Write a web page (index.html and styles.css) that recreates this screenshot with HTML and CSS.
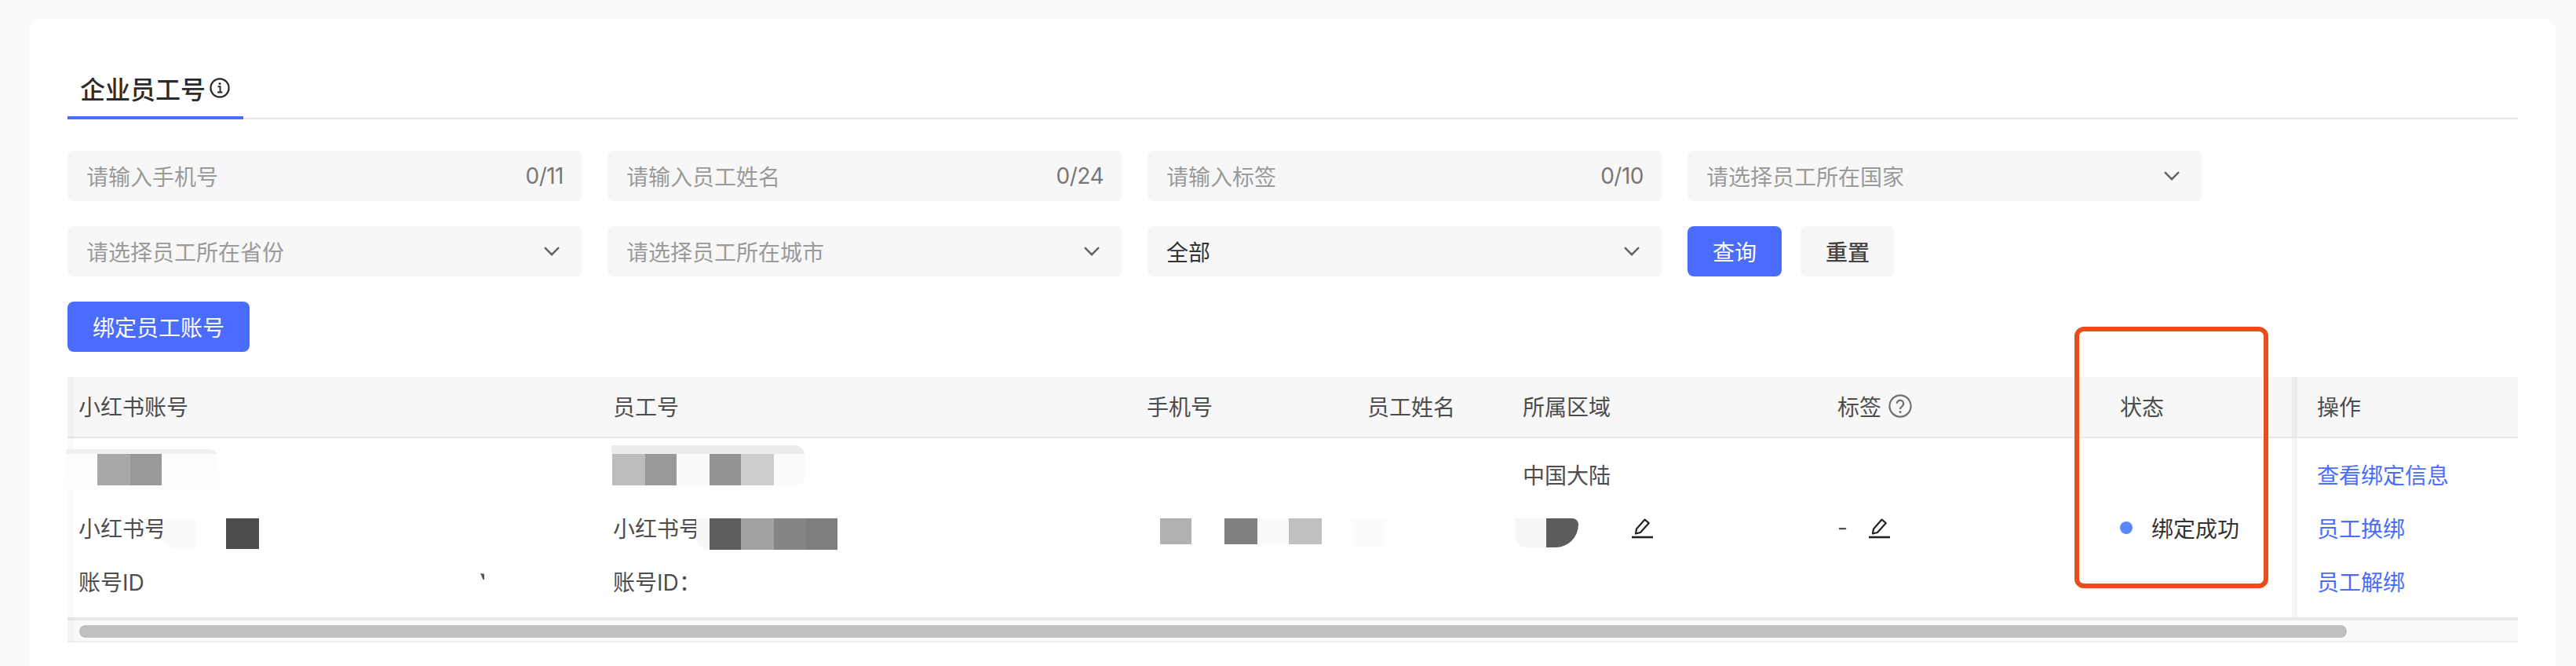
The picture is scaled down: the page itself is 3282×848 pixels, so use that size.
FILE: index.html
```html
<!DOCTYPE html>
<html lang="zh-CN">
<head>
<meta charset="utf-8">
<title>企业员工号</title>
<link rel="stylesheet" href="styles.css">
</head>
<body>
<main class="card">
  <nav class="tabs">
    <div class="tab">
      <span>企业员工号</span>
      <svg class="info-icon" viewBox="0 0 26 26" fill="none" stroke="#2b2b2b"><circle cx="13" cy="13" r="11.6" stroke-width="2.2"/><path d="M10.5 11.3h3v7M10 18.6h6.4" stroke-width="2"/><circle cx="13" cy="7.6" r="1.5" fill="#2b2b2b" stroke="none"/></svg>
    </div>
  </nav>

  <section class="filters">
    <div class="field"><span class="placeholder">请输入手机号</span><span class="count">0/11</span></div>
    <div class="field"><span class="placeholder">请输入员工姓名</span><span class="count">0/24</span></div>
    <div class="field"><span class="placeholder">请输入标签</span><span class="count">0/10</span></div>
    <div class="field"><span class="placeholder">请选择员工所在国家</span><svg class="chevron" viewBox="0 0 20 12" fill="none" stroke="#666" stroke-width="2.6"><path d="M1 1.2l9 9 9-9"/></svg></div>
    <div class="field"><span class="placeholder">请选择员工所在省份</span><svg class="chevron" viewBox="0 0 20 12" fill="none" stroke="#666" stroke-width="2.6"><path d="M1 1.2l9 9 9-9"/></svg></div>
    <div class="field"><span class="placeholder">请选择员工所在城市</span><svg class="chevron" viewBox="0 0 20 12" fill="none" stroke="#666" stroke-width="2.6"><path d="M1 1.2l9 9 9-9"/></svg></div>
    <div class="field"><span class="value">全部</span><svg class="chevron" viewBox="0 0 20 12" fill="none" stroke="#666" stroke-width="2.6"><path d="M1 1.2l9 9 9-9"/></svg></div>
    <div class="actions">
      <button class="btn btn-primary">查询</button>
      <button class="btn btn-plain">重置</button>
    </div>
  </section>

  <button class="btn btn-primary btn-bind">绑定员工账号</button>

  <section class="table">
    <div class="row head">
      <div class="cell">小红书账号</div>
      <div class="cell">员工号</div>
      <div class="cell">手机号</div>
      <div class="cell">员工姓名</div>
      <div class="cell">所属区域</div>
      <div class="cell cell-tag">标签
        <svg class="help-icon" viewBox="0 0 30 30" fill="none" stroke="#707070" stroke-width="2.2"><circle cx="15" cy="15" r="13.6"/><path d="M10.8 11.8a4.2 4.2 0 1 1 6.8 3.3c-1.6 1.2-2.6 2-2.6 3.9"/><circle cx="15" cy="22.6" r="1.5" fill="#707070" stroke="none"/></svg>
      </div>
      <div class="cell">状态</div>
      <div class="cell cell-fixed">操作</div>
    </div>
    <div class="row body">
      <div class="cell stack"><div class="line"></div><div class="line">小红书号</div><div class="line">账号<span class="latin">ID</span></div></div>
      <div class="cell stack"><div class="line"></div><div class="line">小红书号</div><div class="line">账号<span class="latin">ID：</span></div></div>
      <div class="cell"></div>
      <div class="cell"></div>
      <div class="cell stack"><div class="line">中国大陆</div><div class="line line-end">
        <svg class="edit-icon" viewBox="0 0 27 27" fill="none" stroke="#222"><path d="M5 20.5l1-6L16.6 2.6l5.2 4.4L11 19z" stroke-width="2.2" stroke-linejoin="round"/><path d="M0 25h27" stroke-width="2.6"/></svg>
      </div><div class="line"></div></div>
      <div class="cell cell-tag-value"><span class="dash">-</span>
        <svg class="edit-icon" viewBox="0 0 27 27" fill="none" stroke="#222"><path d="M5 20.5l1-6L16.6 2.6l5.2 4.4L11 19z" stroke-width="2.2" stroke-linejoin="round"/><path d="M0 25h27" stroke-width="2.6"/></svg>
      </div>
      <div class="cell cell-status"><i class="dot"></i>绑定成功</div>
      <div class="cell cell-fixed stack links"><div class="line">查看绑定信息</div><div class="line">员工换绑</div><div class="line">员工解绑</div></div>
    </div>
    <div class="scrollbar"><div class="thumb"></div></div>

    <i class="mask m1"></i><i class="mask m2"></i><i class="mask m3"></i><i class="mask m4"></i>
    <i class="mask m5"></i><i class="mask m6"></i><i class="mask m7"></i><i class="mask m8"></i>
    <i class="mask m9"></i><i class="mask m10"></i><i class="mask m11"></i><i class="mask m12"></i>
    <i class="highlight"></i>
  </section>
</main>
</body>
</html>
```
FILE: styles.css
```css
* { box-sizing: border-box; }
html, body { margin: 0; height: 100%; overflow: hidden; }
body {
  background: #fafafa;
  padding: 24px 26px 0 38px;
  font-family: "Noto Sans CJK SC", Inter, sans-serif;
  font-size: 28px;
  color: #444;
}
.card {
  height: 100%;
  background: #fff;
  border-radius: 16px 16px 0 0;
  padding: 67px 48px 0;
}
.tabs { display: flex; border-bottom: 2px solid #e8e8e8; height: 61px; }
.tab {
  display: flex;
  align-items: center;
  gap: 5px;
  width: 224px;
  height: 61px;
  padding: 0 16px 15px;
  border-bottom: 4px solid #4a6cff;
  font-size: 32px;
  line-height: 44px;
  font-weight: 500;
  color: #2b2b2b;
}
.info-icon { width: 26px; height: 26px; flex: none; }

.filters {
  display: grid;
  grid-template-columns: repeat(4, 656px);
  gap: 32px;
  margin-top: 40px;
}
.field {
  display: flex;
  align-items: center;
  justify-content: space-between;
  height: 64px;
  padding: 0 24px;
  background: #f7f7f7;
  border-radius: 8px;
  line-height: 40px;
}
.placeholder { color: #9a9a9a; }
.value { color: #333; }
.count { font-family: Inter, sans-serif; color: #777; letter-spacing: -0.5px; }
.chevron { width: 20px; height: 12px; margin-right: 5px; }
.actions { display: flex; gap: 24px; }
.btn {
  height: 64px;
  width: 120px;
  border: 0;
  padding: 0;
  border-radius: 8px;
  font: inherit;
  line-height: 40px;
}
.btn-primary { background: #4a6cff; color: #fff; }
.btn-plain { background: #f7f7f7; color: #444; font-weight: 500; }
.btn-bind { display: block; width: 232px; margin-top: 32px; }

.table { position: relative; margin-top: 32px; }
.table::before {
  content: "";
  position: absolute;
  left: 0;
  top: 0;
  bottom: 0;
  width: 8px;
  background: rgba(0, 0, 0, .025);
}
.row {
  display: grid;
  grid-template-columns: 681px 680px 281px 198px 401px 360px 233px 288px;
}
.head {
  height: 78px;
  background: #f7f7f7;
  border-bottom: 2px solid #e8e8e8;
  align-items: stretch;
  color: #4d4d4d;
}
.head .cell { display: flex; align-items: center; padding-bottom: 2px; }
.cell { padding-left: 14px; }
.cell-tag { gap: 9px; white-space: nowrap; }
.help-icon { width: 30px; height: 30px; flex: none; }
.cell-fixed { border-left: 7px solid #ececec; padding-left: 25px; }
.body { height: 228px; color: #4d4d4d; }
.body .cell-fixed { border-left-color: #f5f5f5; }
.stack { display: flex; flex-direction: column; justify-content: center; }
.line { height: 68px; line-height: 68px; white-space: nowrap; }
.latin { font-family: Inter, sans-serif; }
.line-end { display: flex; align-items: center; padding-left: 139px; }
.links { color: #4a6cff; }
.cell-tag-value { display: flex; align-items: center; gap: 29px; }
.dash { width: 11px; font-family: Inter, sans-serif; }
.edit-icon { width: 27px; height: 27px; flex: none; }
.cell-status { display: flex; align-items: center; gap: 24px; color: #333; }
.dot { width: 16px; height: 16px; border-radius: 50%; background: #5a86ff; flex: none; }

.scrollbar {
  height: 32px;
  border-top: 4px solid #e8e8e8;
  border-bottom: 2px solid #f0f0f0;
  background: #fafafa;
  padding: 6px 218px 0 15px;
}
.thumb { height: 16px; border-radius: 8px; background: #bfbfbf; }

.mask { position: absolute; display: block; }
.m1 { left: -2px; top: 92px; width: 194px; height: 52px; border-radius: 0 12px 0 0; background: linear-gradient(#f0f0f0 6px, #fcfcfc 6px, #fefefe); }
.m2 { left: 38px; top: 98px; width: 82px; height: 40px; background: linear-gradient(90deg, #a9a9a9 42px, #999 42px); }
.m3 { left: 693px; top: 87px; width: 247px; height: 52px; border-radius: 0 14px 14px 0; background: linear-gradient(#ececec 11px, #fbfbfb 11px); }
.m4 { left: 694px; top: 98px; width: 206px; height: 40px; background: linear-gradient(90deg, #bdbdbd 42px, #999 42px 82px, #fafafa 82px 124px, #949494 124px 164px, #cecece 164px); }
.m5 { left: 121px; top: 180px; width: 42px; height: 39px; border-radius: 0 0 0 16px; background: #fafafa; }
.m6 { left: 202px; top: 180px; width: 42px; height: 39px; background: #4d4d4d; }
.m7 { left: 801px; top: 180px; width: 17px; height: 40px; border-radius: 0 0 0 16px; background: #f8f8f8; }
.m8 { left: 818px; top: 180px; width: 163px; height: 40px; background: linear-gradient(90deg, #5f5f5f 40px, #a3a3a3 40px 82px, #858585 82px 122px, #7e7e7e 122px); }
.m9 { left: 1392px; top: 180px; width: 206px; height: 33px; background: linear-gradient(90deg, #b1b1b1 40px, #fff 40px 82px, #808080 82px 124px, #fafafa 124px 164px, #c0c0c0 164px); }
.m10 { left: 1637px; top: 180px; width: 42px; height: 37px; border-radius: 0 0 6px 6px; background: #fcfcfc; }
.m11 { left: 1844px; top: 180px; width: 81px; height: 37px; border-radius: 0 8px 30px 14px; background: linear-gradient(90deg, #f7f7f7 40px, #5c5c5c 40px); }
.m12 { left: 526px; top: 250px; width: 5px; height: 8px; background: #555; clip-path: polygon(0 0, 100% 10%, 100% 100%, 70% 100%); }
.highlight {
  position: absolute;
  left: 2557px;
  top: -64px;
  width: 247px;
  height: 333px;
  border: 6px solid #e84e1b;
  border-radius: 12px;
}
```
